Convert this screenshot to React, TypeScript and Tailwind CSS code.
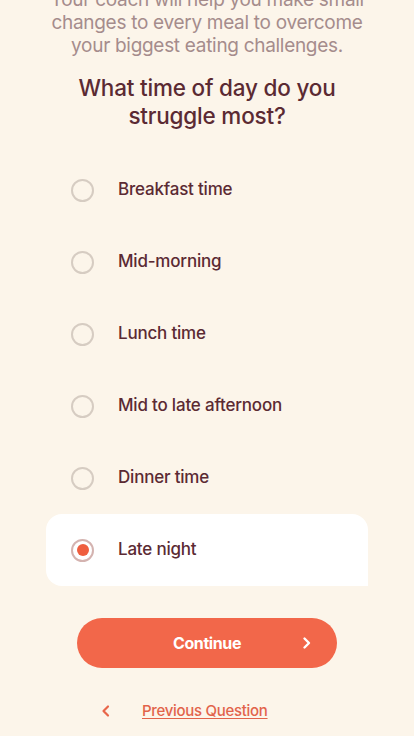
import React, { useState } from "react";

const options = [
  "Breakfast time",
  "Mid-morning",
  "Lunch time",
  "Mid to late afternoon",
  "Dinner time",
  "Late night",
];

export default function App() {
  const [selected, setSelected] = useState(5);
  return (
    <div
      className="w-[414px] h-[736px] overflow-hidden bg-[#fcf5ea]"
      style={{ fontFamily: "Inter, 'Open Sans', sans-serif" }}
    >
      <div className="flex flex-col items-center -mt-[12px]">
        <p className="text-[19px] leading-[23px] text-[#a58c8c] text-center tracking-[-0.3px] px-6">
          Your coach will help you make small
          <br />
          changes to every meal to overcome
          <br />
          your biggest eating challenges.
        </p>
        <h1 className="mt-[17px] text-[22.5px] leading-[28px] text-[#5b2a33] text-center tracking-[-0.2px] font-medium">
          What time of day do you
          <br />
          struggle most?
        </h1>
        <div className="mt-[24px] w-[322px] self-start ml-[46px] flex flex-col">
          {options.map((o, i) => {
            const sel = i === selected;
            return (
              <button
                key={o}
                onClick={() => setSelected(i)}
                className={`h-[72px] flex items-center pl-[25px] text-left ${
                  sel ? "bg-white rounded-2xl rounded-br-none" : ""
                }`}
              >
                <span
                  className={`w-[23px] h-[23px] rounded-full border-2 flex items-center justify-center ${
                    sel ? "border-[#d4b3b0]" : "border-[#d6ccc2]"
                  }`}
                >
                  {sel && <span className="w-[12px] h-[12px] rounded-full bg-[#ef5e3f]" />}
                </span>
                <span className="ml-[24px] text-[17px] text-[#5b2a33] tracking-[-0.2px] font-medium">
                  {o}
                </span>
              </button>
            );
          })}
        </div>
        <button className="mt-[32px] w-[260px] h-[50px] rounded-full bg-[#f2674a] flex items-center relative">
          <span className="flex-1 text-center text-white font-bold text-[16px] tracking-[-0.4px]">
            Continue
          </span>
          <svg
            className="absolute right-[24px] top-1/2 -translate-y-1/2"
            width="12"
            height="14"
            viewBox="0 0 12 14"
            fill="none"
          >
            <path d="M3.5 2.5L8 7L3.5 11.5" stroke="white" strokeWidth="2.4" strokeLinecap="round" strokeLinejoin="round" />
          </svg>
        </button>
        <div className="mt-[32px] flex items-center self-start ml-[100px]">
          <svg width="12" height="14" viewBox="0 0 12 14" fill="none">
            <path d="M8 2.5L3.5 7L8 11.5" stroke="#e8664a" strokeWidth="2.2" strokeLinecap="round" strokeLinejoin="round" />
          </svg>
          <a className="ml-[30px] text-[15px] text-[#e2634a] underline underline-offset-2 font-medium tracking-[-0.3px]">
            Previous Question
          </a>
        </div>
      </div>
    </div>
  );
}
